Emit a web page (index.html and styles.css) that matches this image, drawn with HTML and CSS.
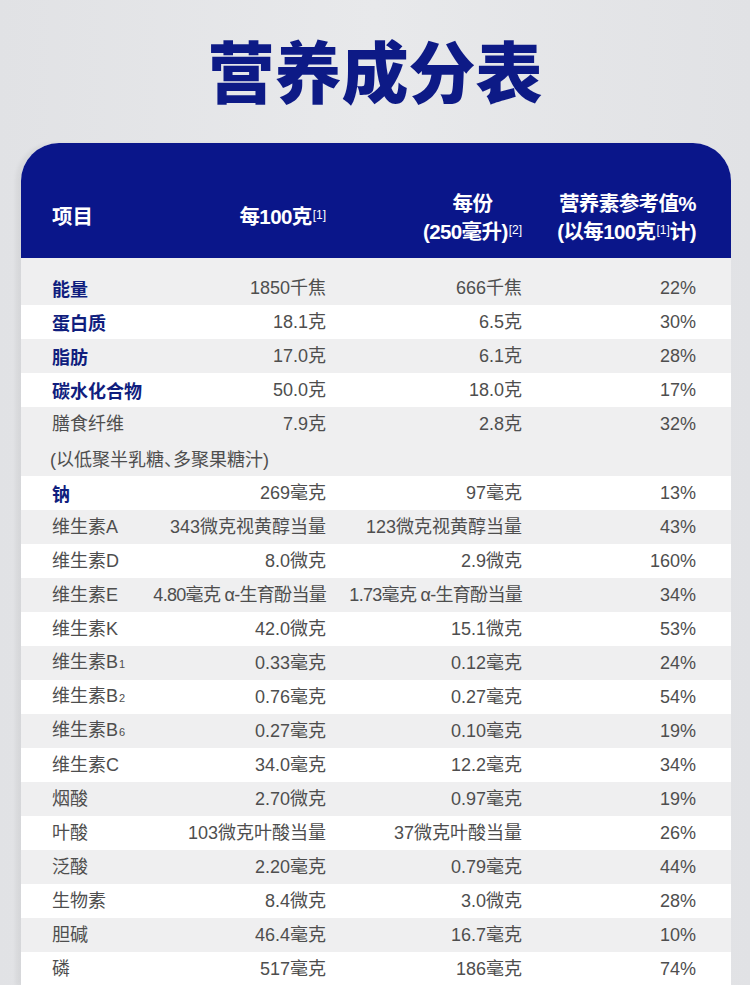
FILE: index.html
```html
<!DOCTYPE html>
<html lang="zh-CN">
<head>
<meta charset="utf-8">
<title>营养成分表</title>
<link rel="stylesheet" href="styles.css">
</head>
<body>
<div class="page">
  <h1 class="title">营养成分表</h1>
  <div class="card">
    <div class="head">
      <div class="hc c1"><span>项目</span></div>
      <div class="hc c2"><span>每100克<sup>[1]</sup></span></div>
      <div class="hc c3"><div class="stack center"><span>每份</span><span>(250毫升)<sup>[2]</sup></span></div></div>
      <div class="hc c4"><div class="stack right"><span>营养素参考值%</span><span>(以每100克<sup>[1]</sup>计)</span></div></div>
    </div>
    <div class="body">
      <div class="row gray first"><div class="c1 b">能量</div><div class="c2">1850千焦</div><div class="c3">666千焦</div><div class="c4">22%</div></div>
      <div class="row"><div class="c1 b">蛋白质</div><div class="c2">18.1克</div><div class="c3">6.5克</div><div class="c4">30%</div></div>
      <div class="row gray"><div class="c1 b">脂肪</div><div class="c2">17.0克</div><div class="c3">6.1克</div><div class="c4">28%</div></div>
      <div class="row"><div class="c1 b">碳水化合物</div><div class="c2">50.0克</div><div class="c3">18.0克</div><div class="c4">17%</div></div>
      <div class="row gray"><div class="c1">膳食纤维</div><div class="c2">7.9克</div><div class="c3">2.8克</div><div class="c4">32%</div></div>
      <div class="row gray note"><div class="c1 wide"><span>(以低聚半乳糖<span class="dun">、</span>多聚果糖汁)</span></div></div>
      <div class="row"><div class="c1 b">钠</div><div class="c2">269毫克</div><div class="c3">97毫克</div><div class="c4">13%</div></div>
      <div class="row gray"><div class="c1">维生素A</div><div class="c2">343微克视黄醇当量</div><div class="c3">123微克视黄醇当量</div><div class="c4">43%</div></div>
      <div class="row"><div class="c1">维生素D</div><div class="c2">8.0微克</div><div class="c3">2.9微克</div><div class="c4">160%</div></div>
      <div class="row gray"><div class="c1">维生素E</div><div class="c2 tight">4.80毫克 α-生育酚当量</div><div class="c3 tight">1.73毫克 α-生育酚当量</div><div class="c4">34%</div></div>
      <div class="row"><div class="c1">维生素K</div><div class="c2">42.0微克</div><div class="c3">15.1微克</div><div class="c4">53%</div></div>
      <div class="row gray"><div class="c1"><span>维生素B<small class="sb">1</small></span></div><div class="c2">0.33毫克</div><div class="c3">0.12毫克</div><div class="c4">24%</div></div>
      <div class="row"><div class="c1"><span>维生素B<small class="sb">2</small></span></div><div class="c2">0.76毫克</div><div class="c3">0.27毫克</div><div class="c4">54%</div></div>
      <div class="row gray"><div class="c1"><span>维生素B<small class="sb">6</small></span></div><div class="c2">0.27毫克</div><div class="c3">0.10毫克</div><div class="c4">19%</div></div>
      <div class="row"><div class="c1">维生素C</div><div class="c2">34.0毫克</div><div class="c3">12.2毫克</div><div class="c4">34%</div></div>
      <div class="row gray"><div class="c1">烟酸</div><div class="c2">2.70微克</div><div class="c3">0.97毫克</div><div class="c4">19%</div></div>
      <div class="row"><div class="c1">叶酸</div><div class="c2">103微克叶酸当量</div><div class="c3">37微克叶酸当量</div><div class="c4">26%</div></div>
      <div class="row gray"><div class="c1">泛酸</div><div class="c2">2.20毫克</div><div class="c3">0.79毫克</div><div class="c4">44%</div></div>
      <div class="row"><div class="c1">生物素</div><div class="c2">8.4微克</div><div class="c3">3.0微克</div><div class="c4">28%</div></div>
      <div class="row gray"><div class="c1">胆碱</div><div class="c2">46.4毫克</div><div class="c3">16.7毫克</div><div class="c4">10%</div></div>
      <div class="row"><div class="c1">磷</div><div class="c2">517毫克</div><div class="c3">186毫克</div><div class="c4">74%</div></div>
    </div>
  </div>
</div>
</body>
</html>
```

FILE: styles.css
```css
* { box-sizing: border-box; }
html, body { margin: 0; padding: 0; }
body {
  width: 750px;
  height: 985px;
  overflow: hidden;
  background: linear-gradient(90deg, #e1e2e5 0%, #e8e9eb 50%, #e1e2e5 100%);
  font-family: "Liberation Sans", "Noto Sans CJK SC", sans-serif;
}
.page { width: 750px; }
.title {
  margin: 0;
  height: 143px;
  padding-bottom: 6px;
  display: flex;
  align-items: center;
  justify-content: center;
  font-family: "Noto Sans CJK SC", sans-serif;
  font-weight: 900;
  font-size: 67px;
  line-height: 1;
  color: #0d1a86;
  letter-spacing: 0;
}
.card {
  margin-left: 21px;
  width: 710px;
  border-radius: 38px 38px 0 0;
  overflow: hidden;
  background: #fff;
  box-shadow: -5px 0 4px rgba(0, 0, 0, 0.05);
}
.head, .row {
  display: grid;
  grid-template-columns: 90px 184px 196px 174px;
  padding: 0 35px 0 31px;
}
.head {
  height: 115px;
  background: #0a168a;
  color: #fff;
  font-weight: 700;
  font-size: 20.5px;
  align-items: center;
}
.hc { white-space: nowrap; display: flex; justify-content: flex-end; line-height: 28px; }
.head .c1 { justify-content: flex-start; padding-top: 33px; }
.head .c2 { padding-top: 33px; letter-spacing: -0.6px; }
.stack { display: flex; flex-direction: column; line-height: 28px; padding-top: 34px; letter-spacing: -0.6px; }
.stack.center { align-items: center; }
.stack.right { align-items: flex-end; }
sup {
  font-size: 12px;
  font-weight: 400;
  vertical-align: 5px;
  line-height: 0;
  letter-spacing: 0;
  margin-left: 1px;
}
.body { background: #fff; }
.row {
  height: 34px;
  align-items: center;
  font-size: 18px;
  color: #4e4e4e;
  white-space: nowrap;
}
.row > div { line-height: 22px; display: flex; justify-content: flex-end; align-items: baseline; }
.row.gray { background: #efeff0; }
.row.first { height: 47px; padding-top: 13px; }
.row.note { height: 35px; }
.row > .c1 { justify-content: flex-start; }
.row > .wide { grid-column: 1 / 5; margin-left: -2px; }
.dun { font-family: "Noto Sans CJK SC", sans-serif; font-feature-settings: "halt"; }
.b { font-weight: 700; color: #101e7e; font-family: "Noto Sans CJK SC", sans-serif; }
.tight { letter-spacing: -0.7px; }
.sb { font-size: 11px; margin-left: 1px; }
```
